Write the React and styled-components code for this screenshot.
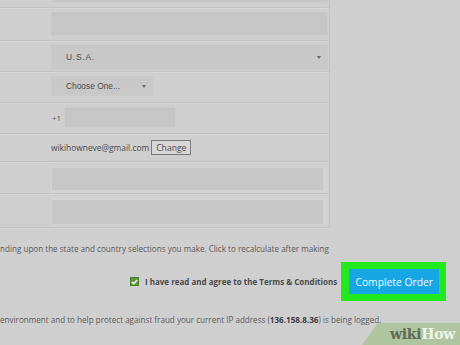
import React from 'react';
import styled, { createGlobalStyle } from 'styled-components';

const GlobalStyle = createGlobalStyle`
  html, body {
    margin: 0;
    padding: 0;
    background: #cfcfcf;
    width: 460px;
    height: 345px;
    overflow: hidden;
  }
  body {
    font-family: "Open Sans", "Liberation Sans", sans-serif;
  }
`;

const Page = styled.div`
  position: relative;
  width: 460px;
  height: 345px;
  overflow: hidden;
`;

const FormTable = styled.div`
  width: 329px;
  margin-top: -20px;
  border-right: 1px solid #c4c4c4;
`;

const Row = styled.div`
  display: flex;
  align-items: flex-start;
  height: ${p => p.h}px;
  padding-top: ${p => p.pt || 0}px;
  padding-left: ${p => p.pl || 51}px;
  box-sizing: border-box;
  border-bottom: 1px solid #c2c2c2;
  box-shadow: 0 1px 0 #d6d6d6;
`;

const Field = styled.div`
  width: ${p => p.w}px;
  height: ${p => p.fh}px;
  box-sizing: border-box;
  background: #c7c7c7;
  border: 1px solid #cbcbcb;
  box-shadow: inset 0 1px 2px #c2c2c2;
`;

const BoxedField = styled.div`
  width: 277px;
  height: ${p => p.fh}px;
  box-sizing: border-box;
  background: #c7c7c7;
  border: 3px solid #d3d3d3;
  border-right-width: 5px;
  border-left-width: 1px;
`;

const Select = styled.div`
  display: flex;
  align-items: center;
  justify-content: space-between;
  width: ${p => p.w}px;
  height: ${p => p.fh}px;
  box-sizing: border-box;
  padding: 0 6px 0 14px;
  background: #c8c8c8;
  border: 1px solid #cacaca;
  font-family: "Liberation Sans", Arial, sans-serif;
  font-size: 8.4px;
  letter-spacing: ${p => p.ls || 0}px;
  color: #4a4a4a;
`;

const Arrow = styled.span`
  width: 0;
  height: 0;
  border-left: 2.5px solid transparent;
  border-right: 2.5px solid transparent;
  border-top: 3px solid #666;
`;

const Prefix = styled.span`
  font-size: 8px;
  color: #555;
  margin-top: 5px;
  width: 12px;
`;

const EmailText = styled.span`
  font-size: 8.4px;
  color: #4a4a4a;
  line-height: 15px;
`;

const ChangeButton = styled.span`
  display: inline-flex;
  align-items: center;
  height: 15px;
  padding: 0 4px;
  margin-left: 2px;
  box-sizing: border-box;
  border: 1px solid #7a7a7a;
  background: #d6d6d6;
  font-size: 8.6px;
  color: #4a4a4a;
`;

const Note = styled.p`
  margin: ${p => p.mt}px 0 0;
  font-size: ${p => p.fs}px;
  line-height: 10px;
  color: #5a5a5a;
  white-space: nowrap;
  b {
    color: #3e3e3e;
  }
`;

const AgreeRow = styled.div`
  display: flex;
  align-items: center;
  margin-top: 8px;
  padding-left: 130px;
  height: 39px;
`;

const Check = styled.span`
  display: inline-flex;
  align-items: center;
  justify-content: center;
  width: 9px;
  height: 9px;
  background: #5b9a34;
  border: 1px solid #4a7f2a;
  box-sizing: border-box;
  margin-right: 6px;
`;

const AgreeText = styled.span`
  font-size: 8px;
  font-weight: 700;
  color: #4a4a4a;
  margin-right: 4px;
`;

const Highlight = styled.div`
  padding: 7px 7px 7px 8px;
  background: #22e81e;
`;

const OrderButton = styled.div`
  width: 90px;
  height: 25px;
  display: flex;
  align-items: center;
  justify-content: center;
  background: #16a6e4;
  color: #f4fbff;
  font-size: 10.3px;
`;

const Watermark = styled.div`
  position: absolute;
  right: 0;
  bottom: 0;
  width: 98px;
  height: 22px;
  background: #aec59f;
  clip-path: polygon(16px 0, 100% 0, 100% 100%, 0 100%);
  display: flex;
  align-items: center;
  justify-content: flex-end;
  padding-right: 5px;
  box-sizing: border-box;
  font-family: "DejaVu Serif", "Liberation Serif", serif;
  font-weight: 700;
  font-size: 14px;
  letter-spacing: -0.3px;
`;

const Wiki = styled.span`
  color: #5c6a56;
`;

const How = styled.span`
  color: #eef3ea;
`;

const App = () => {
  return (
    <Page>
      <GlobalStyle />
      <FormTable>
        <Row h={28} pt={4}>
          <Field w={277} fh={19} />
        </Row>
        <Row h={33} pt={4}>
          <Field w={277} fh={24} />
        </Row>
        <Row h={31} pt={3}>
          <Select w={277} fh={26} ls={0.8}>
            U.S.A.
            <Arrow />
          </Select>
        </Row>
        <Row h={31} pt={4}>
          <Select w={102} fh={20}>
            Choose One...
            <Arrow />
          </Select>
        </Row>
        <Row h={31} pt={4} pl={52}>
          <Prefix>+1</Prefix>
          <Field w={112} fh={21} />
        </Row>
        <Row h={28} pt={6}>
          <EmailText>wikihowneve@gmail.com</EmailText>
          <ChangeButton>Change</ChangeButton>
        </Row>
        <Row h={32} pt={3}>
          <BoxedField fh={28} />
        </Row>
        <Row h={34} pt={3}>
          <BoxedField fh={30} />
        </Row>
      </FormTable>

      <Note mt={16} fs={8.1}>
        nding upon the state and country selections you make. Click to recalculate after making
      </Note>

      <AgreeRow>
        <Check>
          <svg width="7" height="6" viewBox="0 0 7 6">
            <path d="M0.8 3 L2.7 4.8 L6.2 1" fill="none" stroke="#fff" strokeWidth="1.5" />
          </svg>
        </Check>
        <AgreeText>I have read and agree to the Terms &amp; Conditions</AgreeText>
        <Highlight>
          <OrderButton>Complete Order</OrderButton>
        </Highlight>
      </AgreeRow>

      <Note mt={14} fs={8.1}>
        environment and to help protect against fraud your current IP address (<b>136.158.8.36</b>) is being logged.
      </Note>

      <Watermark>
        <Wiki>wiki</Wiki>
        <How>How</How>
      </Watermark>
    </Page>
  );
};

export default App;
